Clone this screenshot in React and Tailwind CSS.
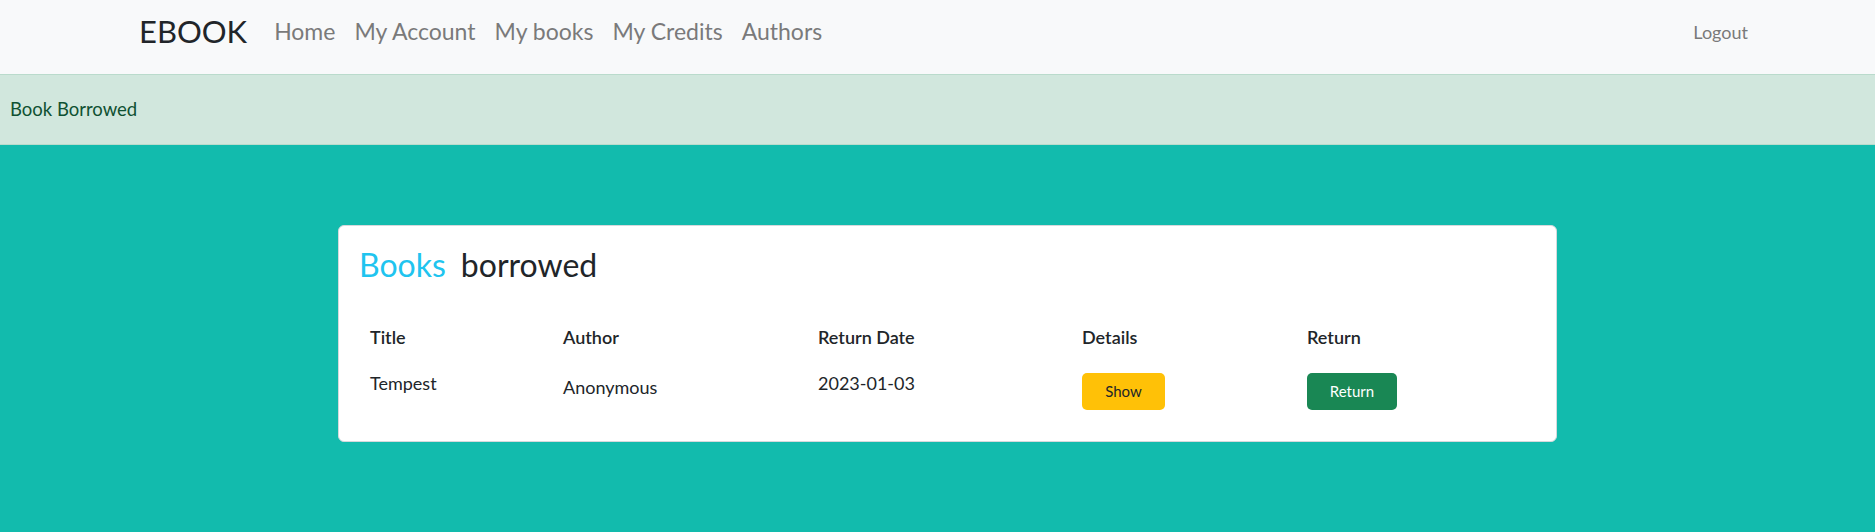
import React from "react";

const links = ["Home", "My Account", "My books", "My Credits", "Authors"];

const books = [
  { title: "Tempest", author: "Anonymous", returnDate: "2023-01-03" },
];

export default function App() {
  return (
    <div className="min-h-screen bg-[#12bbad] font-['Lato','Open_Sans',sans-serif]">
      {/* Navbar */}
      <nav className="h-[74px] bg-[#f8f9fa] flex items-center pl-[139px] pr-[127px] pb-[11px]">
        <a className="text-[31px] leading-none text-[#212529] mr-[27px]">EBOOK</a>
        <ul className="flex items-center gap-[19px]">
          {links.map((l) => (
            <li key={l} className="text-[23px] leading-none text-[#7a7a7a]">
              {l}
            </li>
          ))}
        </ul>
        <a className="ml-auto text-[18px] leading-none text-[#7a7a7a]">Logout</a>
      </nav>

      {/* Alert */}
      <div className="h-[71px] flex items-center pl-[10px] bg-[#d1e7dd] border-y border-[#badbcc] text-[18.5px] text-[#0f5132]">
        Book Borrowed
      </div>

      {/* Card */}
      <main className="pt-[80px] pb-[91px]">
        <div className="ml-[338px] w-[1219px] bg-white border border-[#d5d9dc] rounded-md px-[22px] pt-[20px] pb-[23px]">
          <h2 className="-ml-[2px] text-[32px] leading-[38px] text-[#212529] flex gap-[15px]">
            <span className="text-[#20c4ef]">Books</span>
            <span>borrowed</span>
          </h2>

          <div className="mt-[32px] ml-[1px] grid grid-cols-[193px_255px_264px_225px_1fr] text-[18px] text-[#212529]">
            {["Title", "Author", "Return Date", "Details", "Return"].map((h) => (
              <div key={h} className="px-2 py-2 font-semibold leading-[27px]">
                {h}
              </div>
            ))}

            {books.map((b) => (
              <React.Fragment key={b.title}>
                <div className="px-2 pt-[11px] pb-2 leading-[27px]">{b.title}</div>
                <div className="px-2 pt-[15px] pb-2 leading-[27px]">{b.author}</div>
                <div className="px-2 pt-[11px] pb-2 leading-[27px]">{b.returnDate}</div>
                <div className="px-2 pt-[14px] pb-2">
                  <button className="h-[37px] w-[83px] rounded-[5px] bg-[#ffc107] text-[15px] text-[#212529]">
                    Show
                  </button>
                </div>
                <div className="px-2 pt-[14px] pb-2">
                  <button className="h-[37px] w-[90px] rounded-[5px] bg-[#198754] text-[15px] text-white">
                    Return
                  </button>
                </div>
              </React.Fragment>
            ))}
          </div>
        </div>
      </main>
    </div>
  );
}
